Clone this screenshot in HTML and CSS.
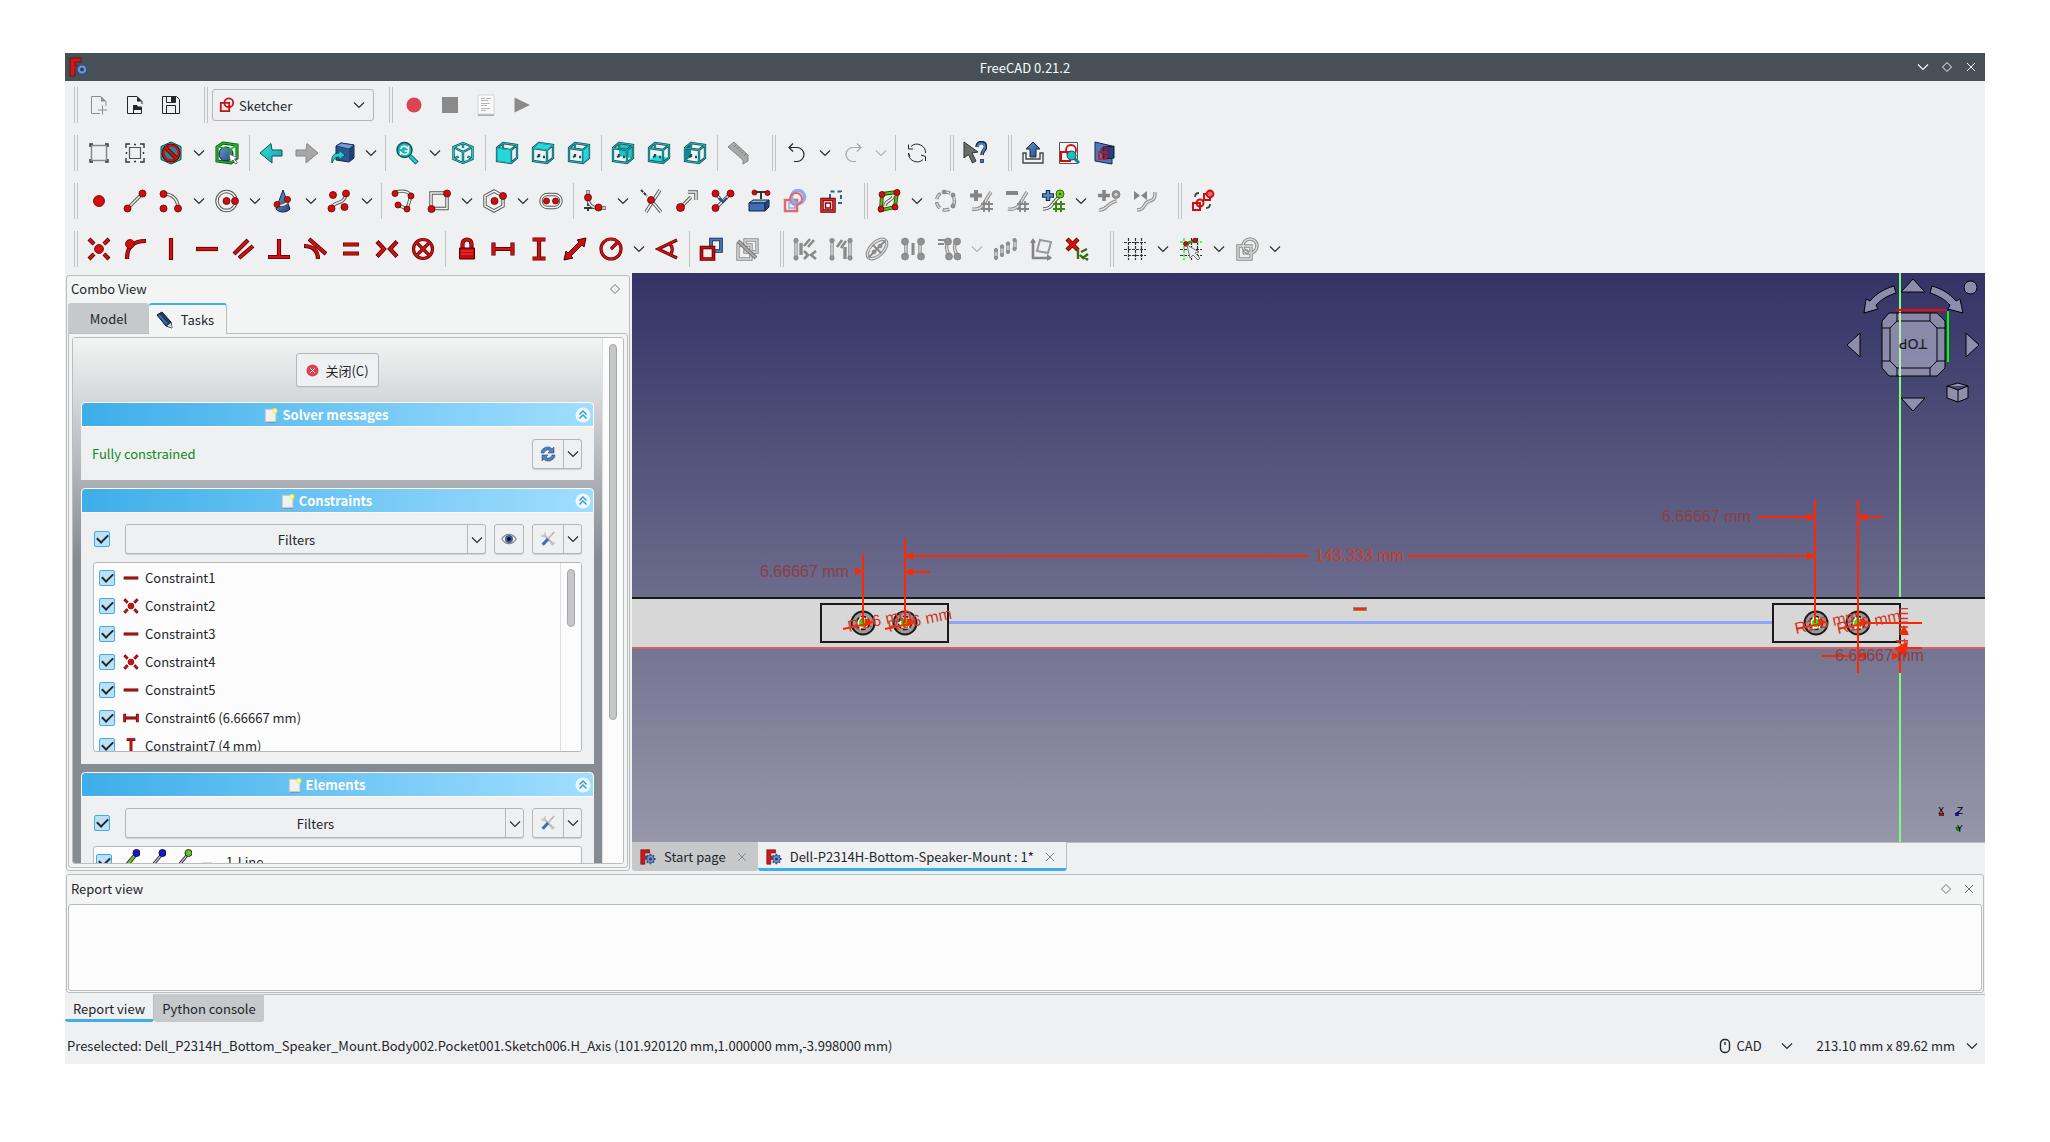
FILE: index.html
```
<!DOCTYPE html>
<html lang="en">
<head>
<meta charset="utf-8">
<title>FreeCAD 0.21.2</title>
<link rel="stylesheet" href="styles.css">
</head>
<body>
<svg class="sprite" aria-hidden="true">
<defs>
<linearGradient id="gblue" x1="0" y1="0" x2="1" y2="1"><stop offset="0" stop-color="#6a96d0"/><stop offset="1" stop-color="#234a80"/></linearGradient>
<linearGradient id="gteal" x1="0" y1="0" x2="1" y2="1"><stop offset="0" stop-color="#34e0e2"/><stop offset="1" stop-color="#16a0a4"/></linearGradient>
</defs>
<symbol id="chev" viewBox="0 0 12 12"><path d="M1 3.5l5 5 5-5" fill="none" stroke="currentColor" stroke-width="1.1"/></symbol>
<symbol id="diamond" viewBox="0 0 12 12"><path d="M6 1.5L10.500 6 6 10.500 1.500 6z" fill="none" stroke="currentColor"/></symbol>
<symbol id="cross" viewBox="0 0 12 12"><path d="M2 2l8 8M10 2l-8 8" fill="none" stroke="currentColor"/></symbol>
<symbol id="logo" viewBox="0 0 20 20"><path d="M1 1h11v4H6v4h4v3H6v7H1z" fill="#d01818" stroke="#6d0a0a" stroke-width=".8"/><path d="M13 6v13M6.500 12.500h13M8.500 8l9 9M17.500 8l-9 9" stroke="#2c4f86" stroke-width="2.400"/><circle cx="13" cy="12.500" r="4.600" fill="#6c97d0" stroke="#2c4f86"/><circle cx="13" cy="12.500" r="1.900" fill="#333c4c"/></symbol>
<symbol id="new" viewBox="0 0 24 24"><path d="M13 20.500H4.500v-17H14l5 5V13" fill="none" stroke="#8b8e90"/><path d="M14 3.500l5 5h-5z" fill="#8b8e90"/><path d="M15.500 12.500v9M11 17h9" stroke="#8b8e90"/></symbol>
<symbol id="open" viewBox="0 0 24 24"><path d="M11 20.500H4.500v-17H14l5 5V11" fill="none" stroke="#232629"/><path d="M14 3.500l5 5h-5z" fill="#232629"/><path d="M10.500 20.500v-8h3l1 1.500h4v6.500zM11 16.500h7" fill="none" stroke="#232629"/><path d="M10 12h4l1 2h3v2h-6l-2 2z" fill="#232629"/></symbol>
<symbol id="save" viewBox="0 0 24 24"><path d="M3.500 3.500h14l3 3v14h-17zM7.500 20v-7.500h9V20M7.500 4v5.500h9V4" fill="none" stroke="#232629"/><path d="M12 4h4v5h-4z" fill="#232629"/></symbol>
<symbol id="wb" viewBox="0 0 18 18"><path d="M2 6.500h9.500v9.500H2z" fill="none" stroke="#c80f14" stroke-width="2"/><circle cx="11" cy="6.500" r="5" fill="none" stroke="#c80f14" stroke-width="2"/></symbol>
<symbol id="rec" viewBox="0 0 24 24"><circle cx="12" cy="12" r="7.500" fill="#da4453"/></symbol>
<symbol id="stop" viewBox="0 0 24 24"><path d="M4 4h16v16H4z" fill="#8a8a8a"/></symbol>
<symbol id="macros" viewBox="0 0 24 24"><path d="M4 22h16" stroke="#aaa" stroke-width="2"/><path d="M4 2h16v19H4z" fill="#fafafa" stroke="#d5d5d5"/><path d="M7 5.500h4M12 5.500h5M7 7.500h7M7 10.500h9M7 12.500h6M7 15.500h9M7 17.500h5" stroke="#b5b5b5"/></symbol>
<symbol id="play" viewBox="0 0 24 24"><path d="M4.500 4.500L20 12 4.500 19.500z" fill="#8a8a8a"/></symbol>
<symbol id="box" viewBox="0 0 24 24"><path d="M4.500 4.500h15v15h-15z" fill="none" stroke="#888" stroke-width="1.500"/><path d="M3 6V3h3M18 3h3v3M21 18v3h-3M6 21H3v-3" fill="none" stroke="#333" stroke-width="1.400"/></symbol>
<symbol id="boxel" viewBox="0 0 24 24"><path d="M6.500 6.500h11v11h-11z" fill="none" stroke="#555" stroke-width="1.200"/><path d="M3 7V3h4M17 3h4v4M21 17v4h-4M7 21H3v-4M11 3.500h2M11 20.500h2M3.500 11v2M20.500 11v2" fill="none" stroke="#333" stroke-width="1.400"/></symbol>
<symbol id="nostyle" viewBox="0 0 24 24"><path d="M12 1l10 4.500v13L12 23 2 18.500v-13z" fill="#1cbabd" stroke="#0a5052"/><circle cx="12" cy="12" r="7.500" fill="none" stroke="#400" stroke-width="4"/><circle cx="12" cy="12" r="7.500" fill="#1b8d98" stroke="#d00d0d" stroke-width="2.500"/><path d="M7 7l10 10" stroke="#400" stroke-width="4"/><path d="M6.500 6.500l11 11" stroke="#d00d0d" stroke-width="2.500"/></symbol>
<symbol id="boxsel" viewBox="0 0 24 24"><path d="M2 6l6-4 14 2v13l-6 5-14-2z" fill="#eee" stroke="#063f06" stroke-width="3"/><circle cx="11" cy="13" r="7" fill="url(#gblue)" stroke="#123"/><path d="M2 6l6-4 14 2v13l-6 5-14-2zM2 6l14 2 6-4M16 8v13" fill="none" stroke="#17b824" stroke-width="1.600"/><path d="M14 13l9 4-3.500 1 3 4-2 1-2.500-4-2.500 2z" fill="#fff" stroke="#555" stroke-width=".8"/></symbol>
<symbol id="left" viewBox="0 0 24 24"><path d="M1 12L12 2.500 13 9h10v6H13v7z" fill="url(#gteal)" stroke="#0d5255"/></symbol>
<symbol id="right" viewBox="0 0 24 24"><path d="M23 12L12 2.500 11 9H1v6h10v7z" fill="#a7a7a7" stroke="#868686"/></symbol>
<symbol id="linkgo" viewBox="0 0 24 24"><path d="M5 5l5-3 13 2v13l-5 4-13-2z" fill="#2c5792" stroke="#10264a"/><path d="M5 5l5-3 13 2-5 4z" fill="#739cd0" stroke="#10264a" stroke-width=".7"/><path d="M18 8l5-4v13l-5 4z" fill="#1d3f72"/><path d="M1 22c-1-7 2-10 7-10V9l6 5-6 5v-3c-4 0-5 2-7 6z" fill="#22cdd0" stroke="#0d5255"/></symbol>
<symbol id="zoom" viewBox="0 0 24 24"><path d="M15 15l7 7" stroke="#0d5255" stroke-width="4.500"/><path d="M15 15l6.500 6.500" stroke="#22cdd0" stroke-width="2.500"/><circle cx="9.500" cy="9" r="7.500" fill="#22b5b8" stroke="#0d5255" stroke-width="1.500"/><path d="M5.500 8c1-3 5-4 7-1l1-1v4h-4M13.500 11c-1 3-5 3-7 1l-1 1v-3" fill="none" stroke="#eafafa" stroke-width="1.400"/></symbol>
<symbol id="iso" viewBox="0 0 24 24"><path d="M12 2l9.500 4v12L12 22 2.500 18V6zM2.500 6l9.500 5 9.500-5M12 11v11M12 2v5M2.500 18l5-2.500M21.500 18l-5-2.500" fill="#e6f5f5" stroke="#0a5458" stroke-width="2.400"/><path d="M12 2l9.500 4v12L12 22 2.500 18V6zM2.500 6l9.500 5 9.500-5M12 11v11M12 2v5M2.500 18l5-2.500M21.500 18l-5-2.500" fill="none" stroke="#2cc4c8" stroke-width="1"/></symbol>
<symbol id="cube" viewBox="0 0 24 24"><path d="M2 7l6-5 14 2v13l-6 5-14-2zM2 7l14 2 6-5M16 9v13M8 2v5M8 13v2l-2 1M12 16h2" fill="none" stroke="#0a5458" stroke-width="2.300"/><path d="M2 7l6-5 14 2v13l-6 5-14-2zM2 7l14 2 6-5M16 9v13M8 2v5" fill="none" stroke="#2cb4b8" stroke-width="1"/></symbol>
<symbol id="front" viewBox="0 0 24 24"><use href="#cube"/><path d="M2.500 7.500l13 2v12l-13-2z" fill="#25d8db"/></symbol>
<symbol id="top" viewBox="0 0 24 24"><use href="#cube"/><path d="M3 7l5-4.500 13 2L16 8.500z" fill="#25d8db"/></symbol>
<symbol id="rightv" viewBox="0 0 24 24"><use href="#cube"/><path d="M16.500 9.500l5-4.500v12l-5 4z" fill="#25d8db"/></symbol>
<symbol id="rear" viewBox="0 0 24 24"><path d="M8 3l14 1.500v13L8 15z" fill="#22c2c5"/><use href="#cube"/></symbol>
<symbol id="bottom" viewBox="0 0 24 24"><path d="M2 20l6-6 14 3-6 5z" fill="#25d8db"/><use href="#cube"/></symbol>
<symbol id="leftv" viewBox="0 0 24 24"><path d="M2 7l6-5v13l-6 6z" fill="#128a8d"/><use href="#cube"/></symbol>
<symbol id="ruler" viewBox="0 0 24 24"><path d="M1 6l6-5 14 13v6l-5 3v-4z" fill="#a9a9a9" stroke="#858585"/><path d="M9 4l-2 2M11.500 6l-2 2M14 8.500l-2 2M16.500 10.500l-2 2M19 13l-2 2" stroke="#777"/></symbol>
<symbol id="undo" viewBox="0 0 24 24"><path d="M9 20.500h3a6.500 6.500 0 000-14H4M8 2.500l-4 4 4 4" fill="none" stroke="currentColor" stroke-width="1.200"/></symbol>
<symbol id="redo" viewBox="0 0 24 24"><path d="M15 20.500h-3a6.500 6.500 0 010-14h8M16 2.500l4 4-4 4" fill="none" stroke="#a4a6a8" stroke-width="1.200"/></symbol>
<symbol id="refresh" viewBox="0 0 24 24"><path d="M6 5.500A8.600 8.600 0 0120.500 12M18 18.500A8.600 8.600 0 013.500 12M3.500 3.500V8h4.500M5 15.500l-1.500-3.500M20.500 20v-4.500L16 14" fill="none" stroke="#232629"/></symbol>
<symbol id="what" viewBox="0 0 24 24"><path d="M1 1l14 10-6 1 4 8-3.500 2-4-8.500L1 17z" fill="#6b6d68" stroke="#333"/><path d="M14 6c0-6 9-6 8.500 0 0 3-3.500 3.500-3.500 8M19 18v4" fill="none" stroke="#10264a" stroke-width="3.600"/><path d="M14.500 6c0-5 7.500-5 7.500 0 0 3-3 3.500-3 8M19 18.500v3" fill="none" stroke="#4a78b8" stroke-width="2"/></symbol>
<symbol id="leave" viewBox="0 0 24 24"><path d="M5 12H2v10h20V12h-3v6H5z" fill="#f4f4f4" stroke="#444" stroke-width="1.400"/><path d="M12 1l7 7h-4v8H9V8H5z" fill="url(#gblue)" stroke="#10264a"/></symbol>
<symbol id="vsketch" viewBox="0 0 24 24"><path d="M2.500 1.500h18v21h-18z" fill="#f7f7f7" stroke="#555"/><path d="M4 11h9v9H4z" fill="none" stroke="#d00d0d" stroke-width="2"/><circle cx="14" cy="9" r="5" fill="none" stroke="#d00d0d" stroke-width="1.800"/><path d="M17 17l5 5" stroke="#0d8588" stroke-width="3"/><circle cx="14.500" cy="14.500" r="4.500" fill="#22bdc0" stroke="#0d5255"/></symbol>
<symbol id="vsection" viewBox="0 0 24 24"><path d="M2 1l17 4v18L2 20z" fill="#4a78b8" stroke="#10264a"/><path d="M10 6l11-1v12l-11 1z" fill="#1e4480" stroke="#0a1a3c"/><path d="M6 11h7v7H6z" fill="none" stroke="#e01010" stroke-width="1.600"/><circle cx="12" cy="10" r="4" fill="none" stroke="#a01030" stroke-width="1.500"/></symbol>
<symbol id="pt" viewBox="0 0 24 24"><circle class="kn" cx="12" cy="12" r="5.500"/></symbol>
<symbol id="line" viewBox="0 0 24 24"><path class="dk" d="M4 20L20 4"/><path class="lt" d="M4 20L20 4"/><circle class="kn" cx="4.500" cy="19.500" r="3.500"/><circle class="kn" cx="19.500" cy="4.500" r="3.500"/></symbol>
<symbol id="arc" viewBox="0 0 24 24"><path class="dk" d="M5 5c9 0 14 6 14 14"/><path class="lt" d="M5 5c9 0 14 6 14 14"/><circle class="kn" cx="4.500" cy="5" r="3.500"/><circle class="kn" cx="4.500" cy="19.500" r="3.500"/><circle class="kn" cx="19" cy="19.500" r="3.500"/></symbol>
<symbol id="circ" viewBox="0 0 24 24"><circle class="dk" cx="11.500" cy="12" r="9.500"/><circle class="lt" cx="11.500" cy="12" r="9.500"/><circle class="kn" cx="11.500" cy="12" r="3.500"/><circle class="kn" cx="20" cy="12" r="3.500"/></symbol>
<symbol id="conic" viewBox="0 0 24 24"><path d="M12 1l7 19c-3 4-11 4-14 0z" fill="url(#gblue)" stroke="#10264a"/><path class="dk" d="M6 16c6 1 10-1 11-5"/><path class="lt" d="M6 16c6 1 10-1 11-5"/><circle class="kn" cx="6" cy="15.500" r="3"/><circle class="kn" cx="16.500" cy="10.500" r="3"/></symbol>
<symbol id="bsp" viewBox="0 0 24 24"><path class="dk" d="M5 19c2-8 12-2 14-14"/><path class="lt" d="M5 19c2-8 12-2 14-14"/><circle class="kn" cx="6" cy="6" r="3.500"/><circle class="kn" cx="19" cy="4.500" r="3.500"/><circle class="kn" cx="4.500" cy="19.500" r="3.500"/><circle class="kn" cx="17.500" cy="18" r="3.500"/></symbol>
<symbol id="poly" viewBox="0 0 24 24"><path class="dk" d="M5 3c8-2 13 0 15 4l-4 13-9-4"/><path class="lt" d="M5 3c8-2 13 0 15 4l-4 13-9-4"/><circle class="kn" cx="4" cy="4.500" r="3"/><circle class="kn" cx="20" cy="7" r="3"/><circle class="kn" cx="7" cy="16" r="3"/><circle class="kn" cx="16" cy="20" r="3"/></symbol>
<symbol id="rect" viewBox="0 0 24 24"><path class="dk" d="M4 4h16v15.500H4z"/><path class="lt" d="M4 4h16v15.500H4z"/><circle class="kn" cx="20" cy="4.500" r="3.500"/><circle class="kn" cx="4.500" cy="20" r="3.500"/></symbol>
<symbol id="hex" viewBox="0 0 24 24"><path class="dk" d="M11 2l9 5v10l-9 5-9-5V7z"/><path class="lt" d="M11 2l9 5v10l-9 5-9-5V7z"/><circle class="kn" cx="11.500" cy="12" r="3.500"/><circle class="kn" cx="20" cy="7" r="3.500"/></symbol>
<symbol id="slot" viewBox="0 0 24 24"><rect class="dk" x="2" y="5.500" width="20" height="13" rx="6.500"/><rect class="lt" x="2" y="5.500" width="20" height="13" rx="6.500"/><circle class="kn" cx="7.500" cy="12" r="3"/><circle class="kn" cx="16.500" cy="12" r="3"/></symbol>
<symbol id="fillet" viewBox="0 0 24 24"><path class="dk" d="M5 1v7M16 19h7"/><path class="lt" d="M5 1.500v7M16 19h6.500"/><path d="M5 13v10M1 19h9" stroke="#333" stroke-width="2" stroke-dasharray="4 1"/><path class="dk" d="M5 9c0 6 4 10 10 10"/><path class="lt" d="M5 9c0 6 4 10 10 10"/><circle class="kn" cx="5" cy="8.500" r="3.500"/><circle class="kn" cx="15.500" cy="18.500" r="3.500"/></symbol>
<symbol id="trim" viewBox="0 0 24 24"><path class="dk" d="M11 10l11 13M21 1L7 23"/><path class="lt" d="M11 10l11 13M21 1L7 23"/><path d="M2 1l6 6" stroke="#333" stroke-width="2" stroke-dasharray="3 1"/><circle class="kn" cx="12" cy="11" r="3.500"/></symbol>
<symbol id="extend" viewBox="0 0 24 24"><path class="dk" d="M5 19L16 8M13 3h8v8"/><path class="lt" d="M5 19L16 8M13 3h8v8"/><circle class="kn" cx="5.500" cy="18.500" r="4"/></symbol>
<symbol id="split" viewBox="0 0 24 24"><path class="dk" d="M5 5l5 6M20 4l-6 6-9 9"/><path class="lt" d="M5 5l5 6M20 4l-6 6-9 9"/><path d="M8 9l4 4 4-4" fill="none" stroke="#204a87" stroke-width="2"/><circle class="kn" cx="4.500" cy="4.500" r="3.500"/><circle class="kn" cx="19.500" cy="4.500" r="3.500"/><circle class="kn" cx="4.500" cy="19" r="3.500"/></symbol>
<symbol id="ext" viewBox="0 0 24 24"><path d="M2 14l4-3h16l-4 3z" fill="#8db4e6" stroke="#10264a"/><path d="M2 14h16v8H2z" fill="#3f6fb0" stroke="#10264a"/><path d="M18 14l4-3v7l-4 4z" fill="#234a80" stroke="#10264a"/><path d="M7 3h14M14 3v7" stroke="#333" stroke-width="2"/><circle class="kn" cx="7.500" cy="3.500" r="2.500"/><circle class="kn" cx="20.500" cy="4" r="2.500"/></symbol>
<symbol id="carbon" viewBox="0 0 24 24"><path d="M2 11h12v11H2z" fill="none" stroke="#e06a6a" stroke-width="2.500"/><circle cx="15" cy="8" r="6.500" fill="none" stroke="#8faaf0" stroke-width="3.500"/><circle cx="13" cy="10" r="6" fill="none" stroke="#e06a6a" stroke-width="2"/><path d="M6 14h6v5H6z" fill="none" stroke="#8faaf0" stroke-width="1.500"/></symbol>
<symbol id="constr" viewBox="0 0 24 24"><path d="M11 9V2.500h11V14h-6" fill="none" stroke="#2f5d9e" stroke-width="2" stroke-dasharray="4 3"/><path d="M3 10.500h12V22H3z" fill="#fff" stroke="#400" stroke-width="3.400"/><path d="M3 10.500h12V22H3z" fill="none" stroke="#e02020" stroke-width="2"/><path d="M6.500 14h5v5h-5z" fill="#fff" stroke="#900" stroke-width="1.500"/></symbol>
<symbol id="bpoly" viewBox="0 0 24 24"><path d="M5 5l15-2-2 15-14 3z" fill="#eee" stroke="#1c4004" stroke-width="3.800"/><path d="M5 5l15-2-2 15-14 3z" fill="none" stroke="#63b512" stroke-width="2.200"/><path class="dk" d="M8 17c0-6 8-5 8-10"/><path class="lt" d="M8 17c0-6 8-5 8-10"/><circle class="kn" cx="5" cy="5.500" r="3"/><circle class="kn" cx="20" cy="3.500" r="3"/><circle class="kn" cx="18" cy="18" r="3"/><circle class="kn" cx="4" cy="20" r="3"/></symbol>
<symbol id="degree" viewBox="0 0 24 24"><circle class="gk" cx="12.500" cy="12" r="9" stroke-dasharray="7 3"/><circle class="gl" cx="12.500" cy="12" r="9" stroke-dasharray="6 4"/><circle class="gn" cx="11" cy="3" r="2"/><circle class="gn" cx="20" cy="6" r="2"/><circle class="gn" cx="20" cy="17" r="2"/></symbol>
<symbol id="kplus" viewBox="0 0 24 24"><path class="gk" d="M3 20c11 2 12-7 19-17"/><path class="gl" d="M3 20c11 2 12-7 19-17"/><path d="M7 1v11M1 6.500h12" stroke="#858585" stroke-width="4"/><path d="M15 12v11M20 12v11M12 15h12M12 20h12" stroke="#858585" stroke-width="1.800"/></symbol>
<symbol id="kminus" viewBox="0 0 24 24"><path class="gk" d="M3 20c11 2 12-7 19-17"/><path class="gl" d="M3 20c11 2 12-7 19-17"/><path d="M1 4h12" stroke="#858585" stroke-width="4"/><path d="M15 12v11M20 12v11M12 15h12M12 20h12" stroke="#858585" stroke-width="1.800"/></symbol>
<symbol id="kins" viewBox="0 0 24 24"><path class="dk" d="M2 20c10 0 8-6 16-12"/><path class="lt" d="M2 20c10 0 8-6 16-12"/><path d="M7 1v11M1 6.500h12" stroke="#10264a" stroke-width="4.500"/><path d="M7 2v9M2 6.500h10" stroke="#5a8aca" stroke-width="2.500"/><circle cx="19" cy="5" r="4" fill="#73d216" stroke="#2c6004"/><circle cx="19" cy="5" r="1.300" fill="#2c6004"/><path d="M15 12v11M20 12v11M12 15h12M12 20h12" stroke="#3d8a08" stroke-width="2"/></symbol>
<symbol id="kknot" viewBox="0 0 24 24"><path class="gk" d="M2 21c8 1 8-8 18-9"/><path class="gl" d="M2 21c8 1 8-8 18-9"/><path d="M7 1v11M1 6.500h12" stroke="#858585" stroke-width="3.600"/><circle class="gn" cx="19" cy="5.500" r="4"/><circle cx="19" cy="5.500" r="1.500" fill="#ddd"/></symbol>
<symbol id="kjoin" viewBox="0 0 24 24"><path class="gk" d="M4 21c9 0 6-8 13-9 5-1 5-5 5-9"/><path class="gl" d="M4 21c9 0 6-8 13-9 5-1 5-5 5-9"/><path d="M1 2l6 4.500L1 11zM14 2L8 6.500l6 4.500z" fill="#858585"/></symbol>
<symbol id="vspace" viewBox="0 0 24 24"><path d="M2 14h7v7H2zM13 5h6v6h-6z" fill="none" stroke="#d00d0d" stroke-width="2"/><circle cx="9" cy="14" r="3.500" fill="none" stroke="#d00d0d" stroke-width="2"/><circle cx="19" cy="5" r="3.500" fill="#d66" stroke="#d00d0d" stroke-width="1.800"/><path d="M4 8c0-3 1-4 4-4M19 15c0 3-1 4-4 4" fill="none" stroke="#444" stroke-width="1.800"/></symbol>
<symbol id="coin" viewBox="0 0 24 24"><path class="ro" d="M2 2l5 5M22 2l-5 5M2 22l5-5M22 22l-5-5"/><path class="rk" d="M2.500 2.500L7 7M21.500 2.500L17 7M2.500 21.500L7 17M21.500 21.500L17 17"/><circle class="kn" cx="12" cy="12" r="4.500"/></symbol>
<symbol id="onobj" viewBox="0 0 24 24"><path class="ro" d="M4 22c0-12 5-18 19-18"/><path class="rk" d="M4 21.500C4 10 9 4 22.500 4"/><circle class="kn" cx="7" cy="7" r="4.500"/></symbol>
<symbol id="vert" viewBox="0 0 24 24"><path class="ro" d="M12 1v22"/><path class="rk" d="M12 1.600v20.800"/></symbol>
<symbol id="hori" viewBox="0 0 24 24"><path class="ro" d="M1 12h22"/><path class="rk" d="M1.600 12h20.800"/></symbol>
<symbol id="para" viewBox="0 0 24 24"><path class="ro" d="M3 17L17 3M8 21L22 9"/><path class="rk" d="M3.500 16.500l13-13M8.500 20.500l13-11"/></symbol>
<symbol id="perp" viewBox="0 0 24 24"><path class="ro" d="M12 2v19M1 20h22"/><path class="rk" d="M12 2.600V20M1.600 20h20.800"/></symbol>
<symbol id="tang" viewBox="0 0 24 24"><path class="ro" d="M6 2l17 15M1 9c8 0 14 4 14 13"/><path class="rk" d="M6.500 2.500l16 14M1.600 9c8 0 13.400 4 13.400 12.400"/></symbol>
<symbol id="equal" viewBox="0 0 24 24"><path class="ro" d="M4 7.500h16M4 16.500h16"/><path class="rk" d="M4.600 7.500h14.800M4.600 16.500h14.800"/></symbol>
<symbol id="symm" viewBox="0 0 24 24"><path class="ro" d="M2 4.500L9 12l-7 7.500M22 4.500L15 12l7 7.500"/><path class="rk" d="M2.500 5L9 12l-6.500 7M21.500 5L15 12l6.500 7"/></symbol>
<symbol id="block" viewBox="0 0 24 24"><g class="thin"><circle class="ro" cx="12" cy="12" r="9.500"/><path class="ro" d="M6 6l12 12M18 6L6 18"/><circle class="rk" cx="12" cy="12" r="9.500"/><path class="rk" d="M5.500 5.500l13 13M18.500 5.500l-13 13"/></g></symbol>
<symbol id="lock" viewBox="0 0 24 24"><path class="ro" d="M7.500 12V7c0-6 9-6 9 0v5"/><path class="rk" d="M7.500 12V7c0-6 9-6 9 0v5"/><path d="M4.500 11h15v11h-15z" fill="#c90a0a" stroke="#400"/><path d="M6 14h12M6 17h12" stroke="#e44"/></symbol>
<symbol id="dimx" viewBox="0 0 24 24"><path class="ro" d="M2.500 5.500v13M21.500 5.500v13M2 12h20"/><path class="rk" d="M2.500 6v12M21.500 6v12M2 12h20"/></symbol>
<symbol id="dimy" viewBox="0 0 24 24"><path class="ro" d="M5.500 2.500h13M5.500 21.500h13M12 2v20"/><path class="rk" d="M6 2.500h12M6 21.500h12M12 2v20"/></symbol>
<symbol id="dist" viewBox="0 0 24 24"><path d="M1 23l2-9 2 2L16 5l-2-2 9-2-2 9-2-2L8 19l2 2z" fill="#d00d0d" stroke="#400"/></symbol>
<symbol id="radius" viewBox="0 0 24 24"><g class="thin"><circle class="ro" cx="12" cy="12" r="10"/><path class="ro" d="M12 12l6-6"/><circle class="rk" cx="12" cy="12" r="10"/><path class="rk" d="M12 12l6.500-6"/></g></symbol>
<symbol id="angle" viewBox="0 0 24 24"><g class="thin"><path class="ro" d="M22 3L3 12l19 9M15 7c3 3 3 8 0 11"/><path class="rk" d="M22 3L3 12l19 9M15 7c3 3 3 8 0 11"/></g></symbol>
<symbol id="driv" viewBox="0 0 24 24"><path d="M12 2.500h10V14H12z" fill="none" stroke="#10264a" stroke-width="3.600"/><path d="M12 2.500h10V14H12z" fill="none" stroke="#4a78b8" stroke-width="1.800"/><path d="M2.500 10.500h12V22h-12z" fill="#f4eeee" stroke="#400" stroke-width="3.600"/><path d="M2.500 10.500h12V22h-12z" fill="none" stroke="#d00d0d" stroke-width="2"/></symbol>
<symbol id="toggle" viewBox="0 0 24 24"><path class="gk" d="M10 3h12v12H10zM3 8h13v14H3z"/><path class="gl" d="M10 3h12v12H10zM3 8h13v14H3z"/><path d="M3 4l18 17" stroke="#777" stroke-width="4"/><path d="M3 4l18 17" stroke="#aaa" stroke-width="2"/></symbol>
<symbol id="seldof" viewBox="0 0 24 24"><path class="gk" d="M3 3v19M8 6v12"/><path class="gl" d="M3 3v19"/><path d="M11 9l6-7M15 10l6-7M11 14l4 4-4 4M23 14l-5 4 5 4" fill="none" stroke="#8a8a8a" stroke-width="2.600"/><circle class="gn" cx="3" cy="3.500" r="2.200"/><circle class="gn" cx="3" cy="21" r="2.200"/></symbol>
<symbol id="selassoc" viewBox="0 0 24 24"><path class="gk" d="M3 3v19M21 3v19M16 10v12"/><path class="gl" d="M3 3v19M21 3v19"/><path d="M8 10l5-7M12 11l5-7" stroke="#8a8a8a" stroke-width="2.600"/><circle class="gn" cx="3" cy="3.500" r="2.200"/><circle class="gn" cx="3" cy="21" r="2.200"/><circle class="gn" cx="21" cy="3.500" r="2.200"/><circle class="gn" cx="21" cy="21" r="2.200"/></symbol>
<symbol id="ellip" viewBox="0 0 24 24"><g transform="rotate(-45 12 12)"><ellipse class="gk" cx="12" cy="12" rx="12" ry="6.500"/><ellipse class="gl" cx="12" cy="12" rx="12" ry="6.500"/><path d="M0 12h24M12 6v12" stroke="#8a8a8a" stroke-width="2"/></g><circle class="gn" cx="9" cy="15" r="2"/><circle class="gn" cx="15" cy="9" r="2"/></symbol>
<symbol id="symtool" viewBox="0 0 24 24"><path class="gk" d="M5 4v16M19 4v16"/><path class="gl" d="M5 4v16M19 4v16"/><path d="M12 6v12" stroke="#888" stroke-width="3"/><circle class="gn" cx="4" cy="4.500" r="3.500"/><circle class="gn" cx="4" cy="19.500" r="3.500"/><circle class="gn" cx="20" cy="4.500" r="3.500"/><circle class="gn" cx="20" cy="19.500" r="3.500"/></symbol>
<symbol id="clone" viewBox="0 0 24 24"><path class="gk" d="M11 5c-3 5-1 10 2 14M19 5c-3 5-1 10 2 14"/><path class="gl" d="M11 5c-3 5-1 10 2 14M19 5c-3 5-1 10 2 14"/><path d="M1 3h7M1 7h6" stroke="#888" stroke-width="2.200"/><circle class="gn" cx="11" cy="4.500" r="3.500"/><circle class="gn" cx="20" cy="4.500" r="3.500"/><circle class="gn" cx="12" cy="19.500" r="3.500"/><circle class="gn" cx="20.500" cy="19.500" r="3.500"/></symbol>
<symbol id="array" viewBox="0 0 24 24"><path class="gk" d="M3 13v8M9 9v9M15 6v9M22 3v9"/><path class="gl" d="M3 13v8M9 9v9M15 6v9M22 3v9"/><g class="gn"><circle cx="3" cy="13" r="1.700"/><circle cx="3" cy="21" r="1.700"/><circle cx="9" cy="9.500" r="1.700"/><circle cx="9" cy="18" r="1.700"/><circle cx="15" cy="6.500" r="1.700"/><circle cx="15" cy="15" r="1.700"/><circle cx="21.500" cy="3" r="1.700"/><circle cx="21.500" cy="12" r="1.700"/></g></symbol>
<symbol id="rmaxis" viewBox="0 0 24 24"><path d="M4 3v18h18" fill="none" stroke="#858585" stroke-width="2.600"/><path d="M1 6l3-5 3 5zM18 17l5 4-5 3z" fill="#858585"/><path d="M11 3l11 2-3 11-11-2z" fill="none" stroke="#999" stroke-width="2"/></symbol>
<symbol id="delall" viewBox="0 0 24 24"><path d="M2 2l11 11M13 2L2 13" stroke="#600" stroke-width="4.400"/><path d="M2.500 2.500l10 10M12.500 2.500l-10 10" stroke="#d81010" stroke-width="2.800"/><path d="M13 12v10M16 15l6-3M15 18l4 4M23 17l-4 3 4 3" stroke="#3d6b14" stroke-width="2.400" fill="none"/></symbol>
<symbol id="grid" viewBox="0 0 24 24"><path d="M5.500 1v22M12.500 1v22M18.500 1v22M1 5.500h22M1 12.500h22M1 18.500h22" stroke="#2e3436" stroke-width="1.200" stroke-dasharray="3 1"/></symbol>
<symbol id="snap" viewBox="0 0 24 24"><path d="M12.500 1v22M18.500 1v22M1 12.500h22M1 18.500h22" stroke="#2e3436" stroke-width="1.200" stroke-dasharray="3 1"/><path d="M5 1v22M1 5h22" stroke="#3de83d" stroke-width="1.500" stroke-dasharray="3 1"/><path d="M7 7l9-4" stroke="#3f9a10" stroke-width="3"/><circle class="kn" cx="7" cy="7" r="2.300"/><circle class="kn" cx="16" cy="3.500" r="2.300"/><path d="M8 8l12 7-4 1 5 5-2 2-5-5-3 3z" fill="#eee" stroke="#777"/></symbol>
<symbol id="order" viewBox="0 0 24 24"><path class="gk" d="M3 9h13v13H3z"/><circle class="gk" cx="15" cy="9" r="7"/><path class="gl" d="M3 9h13v13H3z"/><circle class="gl" cx="15" cy="9" r="7"/><path d="M8 13h5v4H8z" fill="none" stroke="#888"/></symbol>
<symbol id="pencil" viewBox="0 0 20 20"><path d="M2 5l5-3 9 10 1 6-6-2z" fill="#1d3c68" stroke="#0d1d36"/><path d="M4 5l8 9" stroke="#4a78b8" stroke-width="1.500"/><path d="M16 13l1 5-5-2z" fill="#ddd"/></symbol>
<symbol id="page" viewBox="0 0 16 18"><path d="M2 17.500h12" stroke="#8a8f94"/><path d="M1.500 2.500h12v14h-12z" fill="#f1f1f1" stroke="#c8c8c8"/><circle cx="12.500" cy="4" r="3" fill="#fbf03a" opacity=".8"/><circle cx="12.500" cy="4" r="1.500" fill="#fffbb0"/></symbol>
<symbol id="fold" viewBox="0 0 16 16"><circle cx="8" cy="8" r="7.500" fill="#eff8fe"/><path d="M4.500 7.500L8 4l3.500 3.500M4.500 11.500L8 8l3.500 3.500" fill="none" stroke="#2a9bdc" stroke-width="1.400"/></symbol>
<symbol id="sync" viewBox="0 0 16 16"><path d="M1 7c0-6 9-8 11-4l2-2v6H8l2-2C8 3 5 4 4 7zM15 9c0 6-9 8-11 4l-2 2V9h6l-2 2c2 2 5 1 6-2z" fill="#4f7fbe" stroke="#2c4f86" stroke-width=".6"/></symbol>
<symbol id="eye" viewBox="0 0 18 16"><path d="M1 8c4-7 12-7 16 0-4 7-12 7-16 0z" fill="#f4f4f4" stroke="#888" stroke-width="1.500"/><circle cx="9" cy="8" r="4.500" fill="#3465a4"/><circle cx="9" cy="8" r="2.200" fill="#111"/></symbol>
<symbol id="tools" viewBox="0 0 18 18"><path d="M4 4l11 11" stroke="#b9bbbd" stroke-width="2.600"/><path d="M1.500 5c2 2 5 0 4-3.500M13 16l3.500-3" fill="none" stroke="#c6c8ca" stroke-width="2"/><path d="M16 1L9 9" stroke="#bbb" stroke-width="1.800"/><path d="M9 9l-6 6.500" stroke="#3f6fb0" stroke-width="3.500"/></symbol>
<symbol id="err" viewBox="0 0 14 14"><circle cx="7" cy="7" r="6.500" fill="#da4453"/><path d="M4.500 4.500l5 5M9.500 4.500l-5 5" stroke="#fff"/></symbol>
<symbol id="mouse" viewBox="0 0 12 16"><rect x="1.500" y="1.500" width="9" height="13" rx="4" fill="none" stroke="#232629" stroke-width="1.400"/><path d="M6 4v3" stroke="#232629" stroke-width="1.400"/></symbol>
<symbol id="lg" viewBox="0 0 16 18"><path d="M2 17L13 4" stroke="#223" stroke-width="4"/><path d="M2 17L13 4" stroke="#73d216" stroke-width="2.200"/><circle cx="12.500" cy="4" r="3.500" fill="#1515d8" stroke="#113"/></symbol>
<symbol id="lb" viewBox="0 0 16 18"><path d="M2 17L13 4" stroke="#223" stroke-width="3"/><path d="M2 17L13 4" stroke="#c8c8ee" stroke-width="1.200"/><circle cx="12.500" cy="4" r="3.500" fill="#1515d8" stroke="#113"/></symbol>
<symbol id="le" viewBox="0 0 16 18"><path d="M2 17L13 4" stroke="#223" stroke-width="3"/><path d="M2 17L13 4" stroke="#c8c8ee" stroke-width="1.200"/><circle cx="12.500" cy="4" r="3.500" fill="#63c512" stroke="#232"/></symbol>
</svg>

<div class="window">
<header class="title">
<svg class="i20"><use href="#logo"/></svg>
<h1>FreeCAD 0.21.2</h1>
<div class="winbtns">
<button aria-label="Minimize"><svg class="i12"><use href="#chev"/></svg></button>
<button aria-label="Maximize"><svg class="i12"><use href="#diamond"/></svg></button>
<button aria-label="Close window"><svg class="i12"><use href="#cross"/></svg></button>
</div>
</header>

<div class="toolbars">
<div class="row">
<div class="bar"><button aria-label="New"><svg><use href="#new"/></svg></button><button aria-label="Open"><svg><use href="#open"/></svg></button><button aria-label="Save"><svg><use href="#save"/></svg></button></div>
<div class="bar"><div class="combo"><svg class="i18"><use href="#wb"/></svg><select aria-label="Workbench"><option>Sketcher</option></select><svg class="i12"><use href="#chev"/></svg></div></div>
<div class="bar"><button aria-label="Record macro"><svg><use href="#rec"/></svg></button><button aria-label="Stop macro"><svg><use href="#stop"/></svg></button><button aria-label="Macros"><svg><use href="#macros"/></svg></button><button aria-label="Run macro"><svg><use href="#play"/></svg></button></div>
</div>
<div class="row">
<div class="bar"><button aria-label="Fit all"><svg><use href="#box"/></svg></button><button aria-label="Fit selection"><svg><use href="#boxel"/></svg></button><button aria-label="Draw style"><svg><use href="#nostyle"/></svg></button><button class="dd" aria-label="Draw style menu"><svg><use href="#chev"/></svg></button><button aria-label="Box selection"><svg><use href="#boxsel"/></svg></button><i></i><button aria-label="Back"><svg><use href="#left"/></svg></button><button aria-label="Forward"><svg><use href="#right"/></svg></button><button aria-label="Go to linked object"><svg><use href="#linkgo"/></svg></button><button class="dd" aria-label="Link menu"><svg><use href="#chev"/></svg></button><i></i><button aria-label="Sync view"><svg><use href="#zoom"/></svg></button><button class="dd" aria-label="Sync menu"><svg><use href="#chev"/></svg></button><button aria-label="Isometric"><svg><use href="#iso"/></svg></button><i></i><button aria-label="Front"><svg><use href="#front"/></svg></button><button aria-label="Top"><svg><use href="#top"/></svg></button><button aria-label="Right"><svg><use href="#rightv"/></svg></button><i></i><button aria-label="Rear"><svg><use href="#rear"/></svg></button><button aria-label="Bottom"><svg><use href="#bottom"/></svg></button><button aria-label="Left"><svg><use href="#leftv"/></svg></button><i></i><button aria-label="Measure"><svg><use href="#ruler"/></svg></button></div>
<div class="bar"><button aria-label="Undo"><svg><use href="#undo"/></svg></button><button class="dd" aria-label="Undo menu"><svg><use href="#chev"/></svg></button><button aria-label="Redo"><svg><use href="#redo"/></svg></button><button class="dd off" aria-label="Redo menu"><svg><use href="#chev"/></svg></button><i></i><button aria-label="Refresh"><svg><use href="#refresh"/></svg></button></div>
<div class="bar"><button aria-label="What's this"><svg><use href="#what"/></svg></button></div>
<div class="bar"><button aria-label="Leave sketch"><svg><use href="#leave"/></svg></button><button aria-label="View sketch"><svg><use href="#vsketch"/></svg></button><button aria-label="View section"><svg><use href="#vsection"/></svg></button></div>
</div>
<div class="row">
<div class="bar"><button aria-label="Point"><svg><use href="#pt"/></svg></button><button aria-label="Line"><svg><use href="#line"/></svg></button><button aria-label="Arc"><svg><use href="#arc"/></svg></button><button class="dd" aria-label="Arc menu"><svg><use href="#chev"/></svg></button><button aria-label="Circle"><svg><use href="#circ"/></svg></button><button class="dd" aria-label="Circle menu"><svg><use href="#chev"/></svg></button><button aria-label="Conic"><svg><use href="#conic"/></svg></button><button class="dd" aria-label="Conic menu"><svg><use href="#chev"/></svg></button><button aria-label="B-spline"><svg><use href="#bsp"/></svg></button><button class="dd" aria-label="B-spline menu"><svg><use href="#chev"/></svg></button><i></i><button aria-label="Polyline"><svg><use href="#poly"/></svg></button><button aria-label="Rectangle"><svg><use href="#rect"/></svg></button><button class="dd" aria-label="Rectangle menu"><svg><use href="#chev"/></svg></button><button aria-label="Polygon"><svg><use href="#hex"/></svg></button><button class="dd" aria-label="Polygon menu"><svg><use href="#chev"/></svg></button><button aria-label="Slot"><svg><use href="#slot"/></svg></button><i></i><button aria-label="Fillet"><svg><use href="#fillet"/></svg></button><button class="dd" aria-label="Fillet menu"><svg><use href="#chev"/></svg></button><button aria-label="Trim"><svg><use href="#trim"/></svg></button><button aria-label="Extend"><svg><use href="#extend"/></svg></button><button aria-label="Split"><svg><use href="#split"/></svg></button><button aria-label="External geometry"><svg><use href="#ext"/></svg></button><button aria-label="Carbon copy"><svg><use href="#carbon"/></svg></button><button aria-label="Construction geometry"><svg><use href="#constr"/></svg></button></div>
<div class="bar"><button aria-label="Show B-spline information"><svg><use href="#bpoly"/></svg></button><button class="dd" aria-label="B-spline information menu"><svg><use href="#chev"/></svg></button><button aria-label="Convert to B-spline"><svg><use href="#degree"/></svg></button><button aria-label="Increase degree"><svg><use href="#kplus"/></svg></button><button aria-label="Decrease degree"><svg><use href="#kminus"/></svg></button><button aria-label="Knot multiplicity"><svg><use href="#kins"/></svg></button><button class="dd" aria-label="Knot menu"><svg><use href="#chev"/></svg></button><button aria-label="Insert knot"><svg><use href="#kknot"/></svg></button><button aria-label="Join curves"><svg><use href="#kjoin"/></svg></button></div>
<div class="bar"><button aria-label="Switch virtual space"><svg><use href="#vspace"/></svg></button></div>
</div>
<div class="row">
<div class="bar"><button aria-label="Coincident"><svg><use href="#coin"/></svg></button><button aria-label="Point on object"><svg><use href="#onobj"/></svg></button><button aria-label="Vertical"><svg><use href="#vert"/></svg></button><button aria-label="Horizontal"><svg><use href="#hori"/></svg></button><button aria-label="Parallel"><svg><use href="#para"/></svg></button><button aria-label="Perpendicular"><svg><use href="#perp"/></svg></button><button aria-label="Tangent"><svg><use href="#tang"/></svg></button><button aria-label="Equal"><svg><use href="#equal"/></svg></button><button aria-label="Symmetric"><svg><use href="#symm"/></svg></button><button aria-label="Block"><svg><use href="#block"/></svg></button><i></i><button aria-label="Lock"><svg><use href="#lock"/></svg></button><button aria-label="Horizontal distance"><svg><use href="#dimx"/></svg></button><button aria-label="Vertical distance"><svg><use href="#dimy"/></svg></button><button aria-label="Distance"><svg><use href="#dist"/></svg></button><button aria-label="Radius"><svg><use href="#radius"/></svg></button><button class="dd" aria-label="Radius menu"><svg><use href="#chev"/></svg></button><button aria-label="Angle"><svg><use href="#angle"/></svg></button><i></i><button aria-label="Toggle driving"><svg><use href="#driv"/></svg></button><button aria-label="Toggle active"><svg><use href="#toggle"/></svg></button></div>
<div class="bar"><button aria-label="Select constraints"><svg><use href="#seldof"/></svg></button><button aria-label="Select geometry"><svg><use href="#selassoc"/></svg></button><button aria-label="Internal geometry"><svg><use href="#ellip"/></svg></button><button aria-label="Symmetry"><svg><use href="#symtool"/></svg></button><button aria-label="Clone"><svg><use href="#clone"/></svg></button><button class="dd off" aria-label="Clone menu"><svg><use href="#chev"/></svg></button><button aria-label="Array"><svg><use href="#array"/></svg></button><button aria-label="Remove axes alignment"><svg><use href="#rmaxis"/></svg></button><button aria-label="Delete all constraints"><svg><use href="#delall"/></svg></button></div>
<div class="bar"><button aria-label="Grid"><svg><use href="#grid"/></svg></button><button class="dd" aria-label="Grid menu"><svg><use href="#chev"/></svg></button><button aria-label="Snap"><svg><use href="#snap"/></svg></button><button class="dd" aria-label="Snap menu"><svg><use href="#chev"/></svg></button><button aria-label="Rendering order"><svg><use href="#order"/></svg></button><button class="dd" aria-label="Rendering order menu"><svg><use href="#chev"/></svg></button></div>
</div>
</div>

<main class="main">
<section class="dock combo-view">
<div class="dock-head"><h2>Combo View</h2><button aria-label="Float"><svg class="i12"><use href="#diamond"/></svg></button></div>
<div class="tabs"><button class="tab model">Model</button><button class="tab on"><svg class="i20"><use href="#pencil"/></svg>Tasks</button></div>
<div class="pane"><div class="frame">
<div class="tasks">
<button class="close"><svg><use href="#err"/></svg>关闭(C)</button>
<section class="task">
<h3><svg class="pg"><use href="#page"/></svg>Solver messages<button aria-label="Collapse solver messages"><svg><use href="#fold"/></svg></button></h3>
<div class="task-body solver"><span>Fully constrained</span>
<div class="split"><button aria-label="Update"><svg class="i16"><use href="#sync"/></svg></button><button class="arr" aria-label="Update menu"><svg class="i12"><use href="#chev"/></svg></button></div></div>
</section>
<section class="task">
<h3><svg class="pg"><use href="#page"/></svg>Constraints<button aria-label="Collapse constraints"><svg><use href="#fold"/></svg></button></h3>
<div class="task-body">
<div class="filters"><input type="checkbox" checked aria-label="Filter constraints"><div class="split wide"><button>Filters</button><button class="arr" aria-label="Filters menu"><svg class="i12"><use href="#chev"/></svg></button></div><div class="split eye"><button aria-label="Show constraints"><svg class="i16"><use href="#eye"/></svg></button></div><div class="split"><button aria-label="Settings"><svg class="i16"><use href="#tools"/></svg></button><button class="arr" aria-label="Settings menu"><svg class="i12"><use href="#chev"/></svg></button></div></div>
<div class="list"><ul>
<li><label><input type="checkbox" checked><svg class="i16"><use href="#hori"/></svg>Constraint1</label></li>
<li><label><input type="checkbox" checked><svg class="i16"><use href="#coin"/></svg>Constraint2</label></li>
<li><label><input type="checkbox" checked><svg class="i16"><use href="#hori"/></svg>Constraint3</label></li>
<li><label><input type="checkbox" checked><svg class="i16"><use href="#coin"/></svg>Constraint4</label></li>
<li><label><input type="checkbox" checked><svg class="i16"><use href="#hori"/></svg>Constraint5</label></li>
<li><label><input type="checkbox" checked><svg class="i16"><use href="#dimx"/></svg>Constraint6 (6.66667 mm)</label></li>
<li><label><input type="checkbox" checked><svg class="i16"><use href="#dimy"/></svg>Constraint7 (4 mm)</label></li>
</ul><div class="track short"><b></b></div></div>
</div>
</section>
<section class="task">
<h3><svg class="pg"><use href="#page"/></svg>Elements<button aria-label="Collapse elements"><svg><use href="#fold"/></svg></button></h3>
<div class="task-body">
<div class="filters"><input type="checkbox" checked aria-label="Filter elements"><div class="split wide"><button>Filters</button><button class="arr" aria-label="Filters menu"><svg class="i12"><use href="#chev"/></svg></button></div><div class="split"><button aria-label="Settings"><svg class="i16"><use href="#tools"/></svg></button><button class="arr" aria-label="Settings menu"><svg class="i12"><use href="#chev"/></svg></button></div></div>
<div class="list"><ul class="elements"><li><label><input type="checkbox" checked><svg><use href="#lg"/></svg><svg><use href="#lb"/></svg><svg><use href="#le"/></svg><em></em>1-Line</label></li></ul></div>
</div>
</section>
</div>
<div class="track"><b></b></div>
</div></div>
</section>

<section class="doc">
<svg class="scene" viewBox="0 0 1353 569" preserveAspectRatio="xMidYMid slice">
<defs>
<linearGradient id="sky" x1="0" y1="0" x2="0" y2="1"><stop offset="0" stop-color="#333366"/><stop offset="1" stop-color="#9797aa"/></linearGradient>
<g id="hole"><circle r="11.500" fill="#9a9a9a" stroke="#1a1a1a" stroke-width="2"/><circle r="6.500" fill="#fff" stroke="#1a1a1a" stroke-width="1.500" stroke-dasharray="5 2"/><circle r="4" fill="#00ff00"/><path d="M-20 6L4 1" stroke="#ff2600" stroke-width="2"/><path d="M2-5l9 4-9 5z" fill="#ff2600"/></g>
<path id="al" d="M0 0l8-4v8z" fill="#ff2600"/>
<path id="ar" d="M0 0l-8-4v8z" fill="#ff2600"/>
</defs>
<rect width="1353" height="569" fill="url(#sky)"/>
<path d="M1268 0v569" stroke="#7dff7d" stroke-width="2"/>
<rect y="325" width="1353" height="50" fill="#d7d7d7"/>
<path d="M0 325h1353" stroke="#1a1a1a" stroke-width="2"/>
<path d="M0 375h1353" stroke="#cc6666" stroke-width="2"/>
<path d="M317 349.500h823" stroke="#8fa5fa" stroke-width="3"/>
<path d="M189 331h127v38H189zM1141 331h127v38h-127z" fill="none" stroke="#1a1a1a" stroke-width="2"/>
<use href="#hole" x="231" y="350"/><use href="#hole" x="273" y="350"/><use href="#hole" x="1184" y="350"/><use href="#hole" x="1226" y="350"/>
<path d="M721 336h14" stroke="#a08078" stroke-width="4"/>
<g stroke="#ff2600" stroke-width="2" fill="none"><path d="M231 281v69M273 265v85M1183 227v123M1226 227v173M273 283h403M776 283h407M274 299h24M1126 244h57M1226 244h24M1226 350h64M1264 375h26M1190 383h30M1268 376v24M722 336h12"/></g>
<g><use href="#ar" x="231" y="298.500"/><use href="#al" x="273" y="299"/><use href="#al" x="273" y="283"/><use href="#ar" x="1183" y="283"/><use href="#ar" x="1183" y="244"/><use href="#al" x="1226" y="244"/><use href="#al" x="1226" y="383"/><use href="#ar" x="1268" y="383"/><path d="M1272 352l5 10h-10zM1262 376l14-8-2 17z" fill="#ff2600"/></g>
<g class="dim"><text x="128" y="304">6.66667 mm</text><text x="1030" y="249">6.66667 mm</text><text x="1203" y="388">6.66667 mm</text><text class="hot" x="683" y="288">143.333 mm</text></g>
<g class="dim hot"><text transform="translate(217 359) rotate(-12)">R1.6 mm</text><text transform="translate(257 359) rotate(-12)">R1.6 mm</text><text transform="translate(1164 361) rotate(-12)">R1.6 mm</text><text transform="translate(1206 361) rotate(-12)">R1.6 mm</text><text transform="translate(1276 374) rotate(-90)">4 mm</text></g>
<g fill="#9696b4" stroke="#000" fill-opacity=".9">
<path d="M1281 6l12 13h-24zM1281 138l12-13h-24zM1215 72l13-12v24zM1347 72l-13-12v24z"/>
<circle cx="1338.500" cy="14.500" r="6.500"/>
<path d="M1262 13l2 7c-9 3-14 6-20 12l2 4-14 4 2-14 4 2c7-8 14-12 24-15zM1300 13l-2 7c9 3 14 6 20 12l-2 4 15 4-3-14-4 2c-7-8-14-12-24-15z"/>
<path d="M1315 113l11-3 10 3v12l-10 4-11-4zM1315 113l11 4 10-4M1326 117v12"/>
<path fill-opacity=".85" d="M1257 40h48l8 8v47l-8 8h-48l-7-8V48z"/>
<path fill="none" d="M1265 40v8h33v-8M1265 103v-8h33v8M1250 55h8v33h-8M1313 55h-8v33h8M1265 48l-7 7M1298 48l7 7M1265 95l-7-7M1298 95l7-7"/>
</g>
<path d="M1268 40v63" stroke="#b4f0b4" stroke-width="2"/>
<path d="M1264 37h51" stroke="#f00" stroke-width="2"/><path d="M1316 38v51" stroke="#0f0" stroke-width="2"/><path d="M1315 36h2v2h-2z" fill="#00f"/>
<text class="top" transform="translate(1281 72) rotate(180)" y="6">TOP</text>
<g class="axes"><path d="M1307 540h5v3h-5z" fill="#8c1818"/><path d="M1323 540l4-2v5h-4z" fill="#1c1c8c"/><path d="M1323 554h5v4h-3z" fill="#187818"/><text x="1306" y="541">X</text><text x="1325" y="541">Z</text><text x="1325" y="559">Y</text></g>
</svg>
<nav class="tabs doc-tabs"><div class="tab"><svg class="i16"><use href="#logo"/></svg><a href="#start">Start page</a><button aria-label="Close start page"><svg class="i12"><use href="#cross"/></svg></button></div><div class="tab on"><svg class="i16"><use href="#logo"/></svg><a href="#doc">Dell-P2314H-Bottom-Speaker-Mount : 1*</a><button aria-label="Close document"><svg class="i12"><use href="#cross"/></svg></button></div><span class="rest"></span></nav>
</section>
</main>

<section class="dock report">
<div class="dock-head"><h2>Report view</h2><button aria-label="Float report"><svg class="i12"><use href="#diamond"/></svg></button><button aria-label="Close report"><svg class="i12"><use href="#cross"/></svg></button></div>
<textarea readonly aria-label="Report output"></textarea>
</section>
<div class="tabs bottom-tabs"><button class="tab on">Report view</button><button class="tab">Python console</button><span class="rest"></span></div>

<footer class="status"><output>Preselected: Dell_P2314H_Bottom_Speaker_Mount.Body002.Pocket001.Sketch006.H_Axis (101.920120 mm,1.000000 mm,-3.998000 mm)</output>
<label class="navstyle"><svg class="mouse"><use href="#mouse"/></svg><select aria-label="Navigation style"><option>CAD</option></select><svg class="i12"><use href="#chev"/></svg></label>
<button class="dims">213.10 mm x 89.62 mm<svg class="i12"><use href="#chev"/></svg></button>
</footer>
</div>
</body>
</html>
```
FILE: styles.css
```
*, *::before, *::after { box-sizing: border-box; }

body {
  margin: 0;
  padding: 53px 65px 78px;
  height: 100vh;
  min-height: 900px;
  background: #fff;
  color: #232629;
  font: 13px/18px "Noto Sans CJK SC", "Noto Sans", sans-serif;
}

button, select, textarea {
  font: inherit;
  color: inherit;
  margin: 0;
  padding: 0;
  border: 0;
  background: none;
}

h1, h2, h3, ul { margin: 0; padding: 0; font-size: inherit; font-weight: 400; }
ul { list-style: none; }
svg { display: block; flex: none; }
a { color: inherit; text-decoration: none; }
.sprite { position: absolute; width: 0; height: 0; }
.i12 { width: 12px; height: 12px; }
.i16 { width: 16px; height: 16px; }
.i18 { width: 18px; height: 18px; }
.i20 { width: 20px; height: 20px; }

/* Icon strokes */
.dk { fill: none; stroke: #555753; stroke-width: 3.4; }
.lt { fill: none; stroke: #f2f2f0; stroke-width: 1.5; }
.gk { fill: none; stroke: #8c8c8c; stroke-width: 3.4; }
.gl { fill: none; stroke: #dcdcdc; stroke-width: 1.4; }
.gn { fill: #929292; stroke: #7c7c7c; stroke-width: .7; }
.ro { fill: none; stroke: #4a0505; stroke-width: 4.2; }
.rk { fill: none; stroke: #d40f0f; stroke-width: 2.6; }
.thin .ro { stroke-width: 3.2; }
.thin .rk { stroke-width: 1.8; }
.kn { fill: #d30d0d; stroke: #5a0505; stroke-width: .8; }

.window {
  height: 100%;
  display: flex;
  flex-direction: column;
  background: #eff0f1;
}

/* Title bar */
.title {
  flex: none;
  height: 28px;
  display: grid;
  grid-template-columns: 1fr auto 1fr;
  align-items: center;
  padding: 0 8px;
  background: #475057;
  color: #fcfcfc;
}
.title > svg { margin-left: -4px; }
.title h1 { padding-top: 1px; }
.winbtns { display: flex; justify-content: flex-end; gap: 12px; }

/* Toolbars */
.row { height: 48px; padding-left: 9px; display: flex; align-items: center; gap: 15px; }
.bar { height: 36px; display: flex; align-items: center; }
.bar::before {
  content: "";
  width: 4px;
  height: 36px;
  margin-right: 3px;
  border: solid #c0c2c4;
  border-width: 0 1px;
}
.bar button { width: 36px; height: 36px; display: grid; place-items: center; }
.bar svg { width: 24px; height: 24px; }
.bar .dd { width: 20px; }
.bar .dd svg { width: 12px; height: 12px; }
.bar .off { color: #b0b2b4; }
.bar i { width: 4px; height: 36px; margin-left: 4px; border-left: 1px solid #c0c2c4; }
.combo {
  width: 162px;
  height: 32px;
  margin-left: 1px;
  display: grid;
  grid-template-columns: 26px 1fr 20px;
  align-items: center;
  border: 1px solid #b4b6b8;
  border-radius: 3px;
}
.bar .combo svg:first-child { width: 16px; height: 16px; margin-left: 6px; }
.bar .combo svg:last-child { width: 12px; height: 12px; }
.combo select { padding-top: 1px; }
select { appearance: none; }

/* Docks */
.main { flex: 1; min-height: 0; display: grid; grid-template-columns: 567px 1fr; }
.dock { border: 1px solid #babcbe; border-radius: 3px; background: #f3f4f4; }
.dock-head { flex: none; display: flex; align-items: center; gap: 11px; padding: 0 7px 2px 3px; }
.dock-head h2 { flex: 1; }
.dock-head svg { color: #6f7376; }
.combo-view {
  margin: 2px 2px 0 1px;
  padding: 0 1px 2px;
  min-height: 0;
  display: flex;
  flex-direction: column;
}
.combo-view .dock-head { height: 27px; }
.tabs { display: flex; flex: none; }
.tab { background: #c6c8c9; display: flex; align-items: center; justify-content: center; white-space: nowrap; }
.combo-view .tabs { height: 30px; }
.combo-view .tab { border-top: 2px solid #c6c8c9; border-radius: 3px 3px 0 0; }
.combo-view .model { width: 81px; }
.combo-view .tab.on {
  width: 78px;
  height: 31px;
  gap: 6px;
  padding-right: 6px;
  background: #f3f4f4;
  border-top-color: #3daee9;
  border-right: 1px solid #babcbe;
  z-index: 1;
}
.pane { flex: 1; min-height: 0; padding: 3px; border: 1px solid #babcbe; border-radius: 0 3px 3px; }
.frame {
  height: 100%;
  display: grid;
  grid-template-columns: 1fr 21px;
  border: 1px solid #babcbe;
  border-radius: 3px;
  overflow: hidden;
}
.tasks {
  min-height: 0;
  overflow: hidden;
  display: flex;
  flex-direction: column;
  gap: 8px;
  padding: 15px 8px 0;
  background: linear-gradient(#f3f4f4 0, #868c92 220px);
}
.tasks > * { flex: none; }
.track { background: #fcfcfc; border-left: 1px solid #dedfe0; padding: 6px 6px 0; }
.track b { display: block; height: 376px; width: 8px; border: 1px solid #a5a7a9; border-radius: 4px; background: #c6c8c9; }
.track.short b { height: 58px; }
.close {
  align-self: center;
  height: 34px;
  margin-bottom: 7px;
  padding: 1px 9px 0;
  display: flex;
  align-items: center;
  gap: 6px;
}
.close svg { width: 13px; height: 13px; }
.close, .split {
  border: 1px solid #b4b6b8;
  border-radius: 3px;
  background: #eff0f1;
  box-shadow: 0 1px 0 #d0d2d4;
}
.task h3 {
  height: 25px;
  display: flex;
  align-items: center;
  justify-content: center;
  gap: 4px;
  padding-top: 1px;
  border: 1px solid #fff;
  border-radius: 4px 4px 0 0;
  background: linear-gradient(90deg, #3daee9, #a0deff);
  color: #fff;
  font-weight: 700;
}
.pg { width: 14px; height: 16px; margin-left: auto; }
.task h3 button { margin-left: auto; margin-right: 2px; }
.task h3 button svg { width: 16px; height: 16px; }
.task-body { background: #eff0f1; padding: 11px 12px 12px; }
.solver { height: 53px; display: flex; align-items: center; justify-content: space-between; padding: 0 12px 0 11px; color: #0c8a1c; }
.split { height: 30px; width: 50px; display: flex; color: #232629; }
.split button { flex: 1; display: grid; place-items: center; }
.split .arr { flex: 0 0 18px; border-left: 1px solid #b4b6b8; }
.split.wide { flex: 1; }
.split.wide button { padding-top: 1px; }
.split.eye { width: 30px; }
.filters { display: flex; align-items: center; gap: 8px; margin-bottom: 8px; }
.filters > input { margin: 0 7px 0 1px; }
input[type="checkbox"] {
  appearance: none;
  flex: none;
  width: 16px;
  height: 16px;
  border: 1px solid #3daee9;
  border-radius: 2px;
  background: #bde0f4;
  display: grid;
  place-items: center;
}
input[type="checkbox"]::after {
  content: "";
  width: 11px;
  height: 7px;
  margin-bottom: 3px;
  border: solid #232629;
  border-width: 0 0 2px 2px;
  transform: rotate(-45deg);
}
.list {
  height: 190px;
  display: flex;
  border: 1px solid #b4b6b8;
  border-radius: 3px;
  background: #fcfcfc;
  overflow: hidden;
}
.list ul { flex: 1; padding-top: 1px; }
.list label { height: 28px; display: flex; align-items: center; padding-left: 5px; }
.list input { margin: 0 8px 0 0; }
.list .i16 { margin-right: 6px; }
.elements label { gap: 10px; padding-left: 2px; }
.elements input { margin: 0 2px 0 0; }
.elements svg { width: 16px; height: 18px; margin-bottom: 8px; }
.elements em { width: 10px; margin-right: 4px; border-top: 1px solid #ddd; }

/* 3D view */
.doc { min-width: 0; min-height: 0; display: flex; flex-direction: column; }
.scene { flex: 1; width: 100%; min-height: 0; }
.dim { font: 16px "Liberation Sans", sans-serif; fill: #8b3f44; }
.dim .hot, .dim.hot { fill: #cf3a26; }
.top { font: 14px "DejaVu Sans", sans-serif; text-anchor: middle; fill: #1a1a22; }
.axes { font: 9px "DejaVu Sans", sans-serif; fill: #000; }
.rest { flex: 1; border-top: 1px solid #babcbe; }
.doc-tabs { height: 29px; }
.doc-tabs .tab { padding: 4px 10px 0 8px; height: 29px; border-bottom: 3px solid #c6c8c9; border-radius: 0 0 3px 3px; }
.doc-tabs a { margin: 0 10px 0 8px; }
.doc-tabs .tab.on, .bottom-tabs .tab.on {
  background: #eff0f1;
  border-bottom-color: #3daee9;
  border-right: 1px solid #babcbe;
}
.doc-tabs .tab svg { color: #85888b; }

/* Report and status */
.report { flex: none; margin: 3px 1px 0; padding: 0 1px 1px; display: flex; flex-direction: column; }
.report .dock-head { height: 29px; }
.report textarea { height: 87px; resize: none; border: 1px solid #babcbe; border-radius: 3px; background: #fcfcfc; }
.bottom-tabs { height: 28px; margin-top: 1px; }
.bottom-tabs .tab { width: 110px; padding-top: 5px; border-bottom: 3px solid #c6c8c9; border-radius: 0 0 3px 3px; }
.bottom-tabs .tab.on { width: 89px; }
.status { flex: none; height: 42px; display: flex; align-items: center; padding: 6px 7px 0 2px; }
.status output { flex: 1; }
.navstyle { display: flex; align-items: center; gap: 6px; }
.navstyle select { width: 38px; }
.mouse { width: 12px; height: 16px; }
.dims { display: flex; align-items: center; gap: 11px; margin-left: 24px; }
```
